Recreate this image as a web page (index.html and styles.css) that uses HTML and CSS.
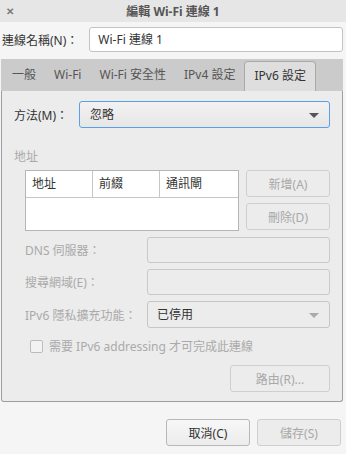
FILE: index.html
```html
<!DOCTYPE html>
<html lang="zh-Hant">
<head>
  <meta charset="UTF-8" />
  <title>編輯 Wi-Fi 連線 1</title>
  <link rel="stylesheet" href="styles.css">
</head>
<body>
  <div class="titlebar">
    <span class="close">✕</span>
    <span class="title">編輯 Wi-Fi 連線 1</span>
  </div>

  <div class="name-row">
    <label>連線名稱(N)：</label>
    <div class="entry">Wi-Fi 連線 1</div>
  </div>

  <div class="tabs">
    <span class="tab">一般</span>
    <span class="tab">Wi-Fi</span>
    <span class="tab">Wi-Fi 安全性</span>
    <span class="tab">IPv4 設定</span>
    <span class="tab active">IPv6 設定</span>
  </div>

  <div class="panel">
    <div class="method-row">
      <label>方法(M)：</label>
      <div class="combo focus">忽略<span class="arrow"></span></div>
    </div>

    <div class="section">地址</div>

    <div class="addr-row">
      <div class="table">
        <div class="thead">
          <span class="c1">地址</span>
          <span class="c2">前綴</span>
          <span class="c3">通訊閘</span>
        </div>
      </div>
      <div class="side-btns">
        <button class="btn" disabled>新增(A)</button>
        <button class="btn" disabled>刪除(D)</button>
      </div>
    </div>

    <div class="form">
      <label class="dim">DNS 伺服器：</label>
      <div class="field"></div>
      <label class="dim">搜尋網域(E)：</label>
      <div class="field"></div>
      <label class="dim">IPv6 隱私擴充功能：</label>
      <div class="combo off">已停用<span class="arrow"></span></div>
    </div>

    <div class="check-row">
      <span class="box"></span>
      <span class="dim">需要 IPv6 addressing 才可完成此連線</span>
    </div>

    <div class="route-row">
      <button class="btn route" disabled>路由(R)...</button>
    </div>
  </div>

  <div class="actions">
    <button class="btn cancel">取消(C)</button>
    <button class="btn" disabled>儲存(S)</button>
  </div>
</body>
</html>
```

FILE: styles.css
```css
body {
  margin: 0;
  width: 346px;
  height: 454px;
  background-color: #f5f5f5;
  color: #333333;
  font-family: "Noto Sans", "Noto Sans CJK TC", sans-serif;
  font-size: 12px;
  overflow: hidden;
}

label {
  white-space: nowrap;
}

.titlebar {
  position: relative;
  height: 22px;
  display: flex;
  align-items: center;
  justify-content: center;
  background-color: #e6e6e6;
}

.titlebar .close {
  position: absolute;
  left: 6px;
  top: 4px;
  font-size: 10px;
  font-weight: bold;
  color: #7a7a7a;
}

.titlebar .title {
  font-weight: bold;
  color: #555555;
}

.name-row {
  display: flex;
  align-items: center;
  padding: 5px 3px 0 2px;
  gap: 11px;
}

.entry {
  flex: 1;
  height: 23px;
  line-height: 23px;
  padding: 0 8px;
  background-color: #ffffff;
  border: 1px solid #c3c3c3;
  border-radius: 3px;
}

.tabs {
  margin: 7px 3px 0 1px;
  height: 32px;
  display: flex;
  align-items: flex-end;
  padding-left: 2px;
  background-color: #cbcbcb;
}

.tab {
  padding: 0 9px;
  height: 30px;
  line-height: 28px;
  color: #555555;
}

.tab.active {
  height: 29px;
  background-color: #dedede;
  border: 1px solid #a9a9a9;
  border-bottom: none;
  border-radius: 4px 4px 0 0;
  color: #333333;
}

.panel {
  margin: 0 3px 0 1px;
  height: 311px;
  box-sizing: border-box;
  border: 1px solid #9e9e9e;
  border-top: none;
  border-radius: 0 0 3px 3px;
  background-color: #ececec;
  padding: 10px 12px 0 12px;
}

.method-row {
  display: flex;
  align-items: center;
  gap: 11px;
}

.combo {
  position: relative;
  flex: 1;
  height: 25px;
  line-height: 25px;
  padding: 0 10px;
  border: 1px solid #bfbfbf;
  border-radius: 3px;
  background: linear-gradient(#f2f2f2, #e6e6e6);
}

.combo.focus {
  border-color: #5aa0e6;
}

.arrow {
  position: absolute;
  right: 10px;
  top: 11px;
  width: 0;
  height: 0;
  border-left: 5px solid transparent;
  border-right: 5px solid transparent;
  border-top: 5px solid #555555;
}

.combo.off {
  padding-left: 9px;
  background: #ececec;
  border-color: #c6c6c6;
}

.combo.off .arrow {
  border-top-color: #aaaaaa;
}

.section {
  margin-top: 19px;
  color: #aaaaaa;
}

.addr-row {
  display: flex;
  gap: 7px;
  margin: 5px 0 0 11px;
}

.table {
  width: 212px;
  height: 59px;
  border: 1px solid #b5b5b5;
  background-color: #ffffff;
}

.thead {
  display: flex;
  height: 26px;
  border-bottom: 1px solid #c6c6c6;
}

.thead span {
  padding: 0 6px;
  line-height: 26px;
}

.thead .c1 { width: 54px; border-right: 1px solid #c6c6c6; }
.thead .c2 { width: 54px; border-right: 1px solid #c6c6c6; }
.thead .c3 { flex: 1; }

.side-btns {
  flex: 1;
  display: flex;
  flex-direction: column;
  gap: 6px;
}

.btn {
  height: 27px;
  font-family: inherit;
  font-size: 12px;
  color: #333333;
  border: 1px solid #b8b8b8;
  border-radius: 3px;
  background: linear-gradient(#f7f7f7, #ececec);
}

.btn:disabled {
  color: #a8a8a8;
  border-color: #cfcfcf;
  background: #ececec;
}

.form {
  display: grid;
  grid-template-columns: 122px 1fr;
  row-gap: 6px;
  align-items: center;
  margin: 6px 0 0 11px;
}

.field {
  height: 24px;
  border: 1px solid #c9c9c9;
  border-radius: 3px;
  background-color: #ececec;
}

.dim {
  color: #aaaaaa;
}

.check-row {
  display: flex;
  align-items: center;
  gap: 6px;
  margin: 9px 0 0 16px;
}

.box {
  width: 11px;
  height: 11px;
  border: 1px solid #bcbcbc;
  border-radius: 2px;
  background-color: #f3f3f3;
}

.route-row {
  display: flex;
  justify-content: flex-end;
  margin-top: 10px;
}

.btn.route {
  width: 100px;
}

.actions {
  display: flex;
  justify-content: flex-end;
  gap: 7px;
  padding: 17px 5px 0 0;
}

.actions .btn {
  width: 84px;
}
```
